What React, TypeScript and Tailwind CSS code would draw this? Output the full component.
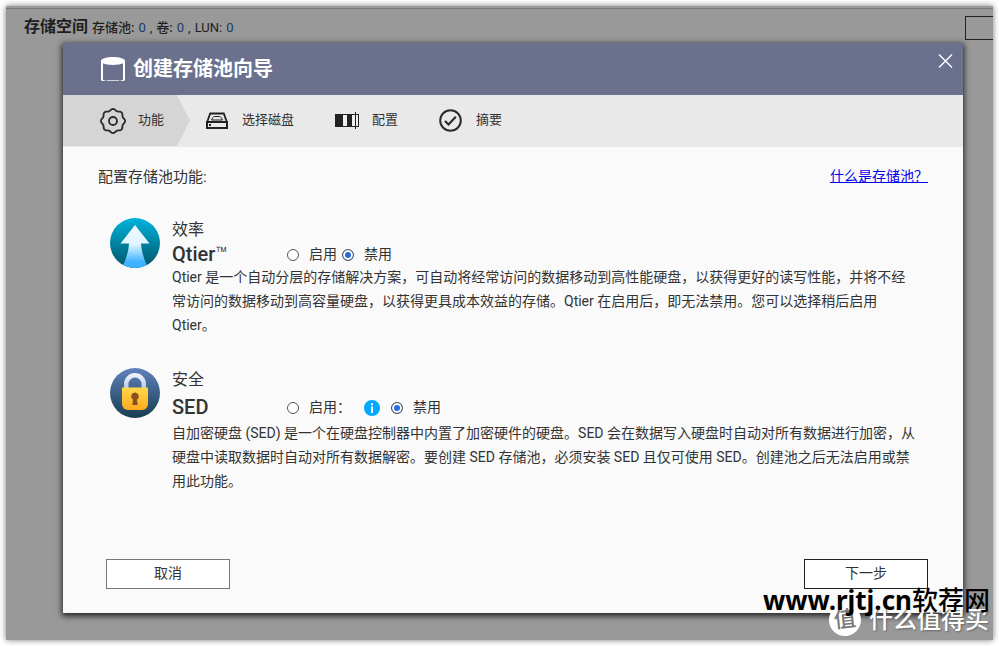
import { useState } from "react";
import type { ReactNode } from "react";

const radioClass =
  "mt-0.5 size-3 shrink-0 appearance-none rounded-full border border-[#555] bg-white checked:bg-[#2a68dc] checked:shadow-[inset_0_0_0_2px_white]";

const PoolIcon = () => (
  <svg width="24" height="24" viewBox="0 0 24 24" aria-hidden="true">
    <path d="M0 3.500C1 1.200 6 0 12 0s11 1.200 12 3.500v19.500l-1 1h-5.500c2-.3 3.500-.7 4.500-1.300V6.300C20 7.400 16 8 12 8S4 7.400 2 6.300v16.400c1 .6 2.500 1 4.500 1.300H1l-1-1z" fill="white" />
    <path d="M6 23.500h12" stroke="white" strokeWidth="1" opacity="0.7" />
  </svg>
);

// eight soft teeth around the hub
const gearPoints = Array.from({ length: 96 }, (_, i) => {
  const a = (i / 96) * Math.PI * 2;
  const r = 11.3 + 0.8 * Math.cos(8 * a);
  return `${(13 + r * Math.cos(a)).toFixed(2)},${(13 + r * Math.sin(a)).toFixed(2)}`;
}).join(" ");

const GearIcon = () => (
  <svg width="26" height="26" viewBox="0 0 26 26" fill="none" stroke="#2b2b2b" strokeWidth="1.8" aria-hidden="true">
    <polygon points={gearPoints} strokeLinejoin="round" />
    <circle cx="13" cy="13" r="4" />
  </svg>
);

const DiskIcon = () => (
  <svg width="22" height="18" viewBox="0 0 22 18" fill="none" stroke="#222" aria-hidden="true">
    <path d="M1 10.500 4.200 1.500h13.600L21 10.500" strokeWidth="1.8" />
    <rect x="1" y="10" width="20" height="6" strokeWidth="2" />
    <path d="M5.500 8C6.500 6.500 7 4.500 8.500 4.500h5C15 4.500 15.500 6.500 16.500 8z" strokeWidth="1" />
    <path d="M3 13h2" strokeWidth="2" />
  </svg>
);

const ConfigIcon = () => (
  <svg width="24" height="18" viewBox="-1 0 24 18" className="overflow-visible" aria-hidden="true">
    <path d="M0 2h24v13H0z" fill="#222" />
    <path d="M8 3h4v11H8zM17 3h3v11h-3zM21 3h2v11h-2z" fill="#f0f0f0" />
    <path d="M20.500 0v17" stroke="#222" />
  </svg>
);

const SummaryIcon = () => (
  <svg width="24" height="24" viewBox="0 0 24 24" fill="none" stroke="#2b2b2b" aria-hidden="true">
    <circle cx="12.500" cy="11.500" r="10.300" strokeWidth="2" />
    <path d="m7 12 3.500 3.500 7.300-7.700" strokeWidth="2.200" />
  </svg>
);

const QtierIcon = () => (
  <svg className="size-[50px] shrink-0" viewBox="0 0 50 50" aria-hidden="true">
    <defs>
      <linearGradient id="qtier-bg" x1="0" y1="0" x2="0" y2="1">
        <stop offset="0" stopColor="#00b3dc" />
        <stop offset="1" stopColor="#005468" />
      </linearGradient>
      <linearGradient id="qtier-arrow" x1="0" y1="0" x2="0" y2="1">
        <stop offset="0" stopColor="#eefaff" />
        <stop offset="0.45" stopColor="#e2f5ff" />
        <stop offset="0.85" stopColor="#41b4ff" />
        <stop offset="1" stopColor="#38b2ff" />
      </linearGradient>
      <clipPath id="qtier-clip">
        <circle cx="25" cy="25" r="25" />
      </clipPath>
    </defs>
    <circle cx="25" cy="25" r="25" fill="url(#qtier-bg)" />
    <path d="M25 7 39.500 25.500H31C31.500 34 34 41 38 50H12c4-9 6.500-16 7-24.500h-8.500z" fill="url(#qtier-arrow)" clipPath="url(#qtier-clip)" />
  </svg>
);

const SedIcon = () => (
  <svg className="size-[50px] shrink-0" viewBox="0 0 50 50" aria-hidden="true">
    <defs>
      <linearGradient id="sed-bg" x1="0" y1="0" x2="0" y2="1">
        <stop offset="0" stopColor="#6082bd" />
        <stop offset="1" stopColor="#173d4f" />
      </linearGradient>
      <linearGradient id="sed-body" x1="0" y1="0" x2="0" y2="1">
        <stop offset="0" stopColor="#ffd84a" />
        <stop offset="1" stopColor="#ffa91f" />
      </linearGradient>
      <linearGradient id="sed-shackle" x1="0" y1="0" x2="0" y2="1">
        <stop offset="0" stopColor="#f4f7ff" />
        <stop offset="1" stopColor="#b9cbe8" />
      </linearGradient>
    </defs>
    <circle cx="25" cy="25" r="25" fill="url(#sed-bg)" />
    <path d="M14 20v-4a11 11 0 0 1 22 0v4h-4.500v-4a6.500 6.500 0 0 0-13 0v4z" fill="url(#sed-shackle)" />
    <path d="M12 19.500h26v16.500a6 6 0 0 1-6 6H18a6 6 0 0 1-6-6z" fill="url(#sed-body)" />
    <path d="M25 24.500a3.800 3.800 0 0 1 2 7l.7 5.500h-5.400l.7-5.500a3.800 3.800 0 0 1 2-7z" fill="#8a4f1c" />
  </svg>
);

const InfoIcon = () => (
  <svg width="16" height="16" viewBox="0 0 16 16" role="img" aria-label="info">
    <circle cx="8" cy="8" r="8" fill="#00a8ff" />
    <path d="M7 3.200h2v2H7zM7 6.500h2V13H7z" fill="white" />
  </svg>
);

const steps = [
  { label: "选择磁盘", icon: <DiskIcon /> },
  { label: "配置", icon: <ConfigIcon /> },
  { label: "摘要", icon: <SummaryIcon /> },
];

const counts = [
  { label: "存储池:", value: 0, className: "font-medium" },
  { label: "卷:", value: 0, className: "font-medium" },
  { label: "LUN:", value: 0, className: "font-normal" },
];

type FeatureProps = {
  id: string;
  icon: ReactNode;
  category: string;
  title: ReactNode;
  enableLabel: string;
  info?: boolean;
  rowClass: string;
  children: ReactNode;
};

const Feature = ({ id, icon, category, title, enableLabel, info, rowClass, children }: FeatureProps) => {
  const [enabled, setEnabled] = useState(false);

  return (
    <section className="flex gap-3">
      {icon}
      <div className="min-w-0 flex-1">
        <h3 className="text-base leading-6">{category}</h3>
        <div className={rowClass}>
          <h4 className="w-[115px] text-xl leading-6 font-medium">{title}</h4>
          <input
            type="radio"
            id={id + "-on"}
            name={id}
            className={radioClass}
            checked={enabled}
            onChange={() => setEnabled(true)}
          />
          <label htmlFor={id + "-on"} className="ml-2.5">
            {enableLabel}
          </label>
          {info && (
            <span className="mt-0.5 mr-1.5 ml-[13px]">
              <InfoIcon />
            </span>
          )}
          <input
            type="radio"
            id={id + "-off"}
            name={id}
            className={radioClass + " ml-[5px]"}
            checked={!enabled}
            onChange={() => setEnabled(false)}
          />
          <label htmlFor={id + "-off"} className="ml-2.5">
            禁用
          </label>
        </div>
        <p className="leading-6">{children}</p>
      </div>
    </section>
  );
};

const Watermark = () => (
  <div className="pointer-events-none absolute right-[3px] bottom-0.5 text-right whitespace-nowrap">
    <div className="relative z-10 font-['Noto_Sans','Noto_Sans_CJK_SC',sans-serif] text-[26px] leading-8 font-bold text-black">
      www.rjtj.cn<span className="font-medium">软荐网</span>
    </div>
    <div className="-mt-3.5 flex items-center justify-end gap-2 pr-px text-2xl leading-9 font-medium text-white [text-shadow:1px_1px_2px_#666]">
      <span className="flex size-8 -rotate-6 items-center justify-center rounded-full bg-white text-[22px] font-medium text-[#777] [text-shadow:none]">
        值
      </span>
      什么值得买
    </div>
  </div>
);

export default function App() {
  return (
    <div className="min-h-screen bg-white p-1.5 font-[Roboto,'Noto_Sans_CJK_SC',sans-serif] text-sm text-[#333]">
      <main className="relative bg-[#999] pt-0.5 pb-[27px] shadow-[0_0_6px_#777]">
        <div className="border-t border-[#777]" />
        <header className="flex h-[34px] items-end justify-between">
          <div className="ml-[18px] flex items-baseline gap-1 pb-[3px] leading-6 text-[#1f1f1f]">
            <h1 className="text-base font-bold">存储空间</h1>
            <p className="flex gap-1 text-[13px]">
              {counts.map((item, i) => (
                <span key={item.label} className="flex gap-1">
                  {i > 0 && <span>,</span>}
                  <span className={item.className}>{item.label}</span>
                  <span className="text-[#1b3a66]">{item.value}</span>
                </span>
              ))}
            </p>
          </div>
          <button aria-label="menu" className="mb-[3px] h-6 w-7 border border-r-0 border-[#222]" />
        </header>

        <div role="dialog" aria-labelledby="wizard-title" className="mr-[30px] ml-[57px] bg-[#fafafa] shadow-[0_2px_6px_1px_#222]">
          <div className="flex h-[52px] items-center justify-between bg-[#6b718d] pr-2.5 pb-px pl-[38px] text-white">
            <h2 id="wizard-title" className="flex items-center gap-2 text-xl font-bold">
              <PoolIcon />
              创建存储池向导
            </h2>
            <button aria-label="关闭" className="mb-4">
              <svg width="16" height="16" viewBox="0 0 16 16" stroke="white" strokeWidth="1.400" aria-hidden="true">
                <path d="m2 1.500 13 13M15 1.500l-13 13" />
              </svg>
            </button>
          </div>

          <ol className="flex h-[52px] items-center bg-[#e9e9e9] pb-px text-[13px]">
            <li className="flex h-full w-[127px] items-center gap-3 bg-[#d5d5d5] pl-[37px] [clip-path:polygon(0_0,114px_0,100%_50%,114px_100%,0_100%)]">
              <GearIcon />
              功能
            </li>
            <li className="flex items-center gap-10 pl-4">
              {steps.map((step) => (
                <span key={step.label} className="flex items-center gap-3.5">
                  {step.icon}
                  {step.label}
                </span>
              ))}
            </li>
          </ol>

          <div className="pt-[17px] pb-6">
            <div className="flex justify-between pr-[35px] pl-[35px] leading-6">
              <p className="pt-px text-[15px]">配置存储池功能:</p>
              <a href="#" className="text-[#0000ee] underline">
                什么是存储池？
              </a>
            </div>

            <div className="mt-[29px] flex flex-col gap-[31px] pr-[47px] pl-[47px]">
              <Feature
                id="qtier"
                icon={<QtierIcon />}
                category="效率"
                title={
                  <>
                    Qtier<span className="font-light">™</span>
                  </>
                }
                enableLabel="启用"
                rowClass="flex h-[23px] items-center"
              >
                Qtier 是一个自动分层的存储解决方案，可自动将经常访问的数据移动到高性能硬盘，以获得更好的读写性能，并将不经常访问的数据移动到高容量硬盘，以获得更具成本效益的存储。Qtier
                在启用后，即无法禁用。您可以选择稍后启用 Qtier。
              </Feature>
              <Feature
                id="sed"
                icon={<SedIcon />}
                category="安全"
                title="SED"
                enableLabel="启用："
                info
                rowClass="flex h-[29px] items-center"
              >
                自加密硬盘 (SED) 是一个在硬盘控制器中内置了加密硬件的硬盘。SED
                会在数据写入硬盘时自动对所有数据进行加密，从硬盘中读取数据时自动对所有数据解密。要创建 SED
                存储池，必须安装 SED 且仅可使用 SED。创建池之后无法启用或禁用此功能。
              </Feature>
            </div>

            <div className="mt-[66px] flex justify-between pr-[35px] pl-[43px]">
              <button className="h-[30px] w-[124px] border border-[#777] bg-white pb-0.5">取消</button>
              <button className="h-[30px] w-[124px] border border-[#222] bg-white pb-0.5">下一步</button>
            </div>
          </div>
        </div>
        <Watermark />
      </main>
    </div>
  );
}
